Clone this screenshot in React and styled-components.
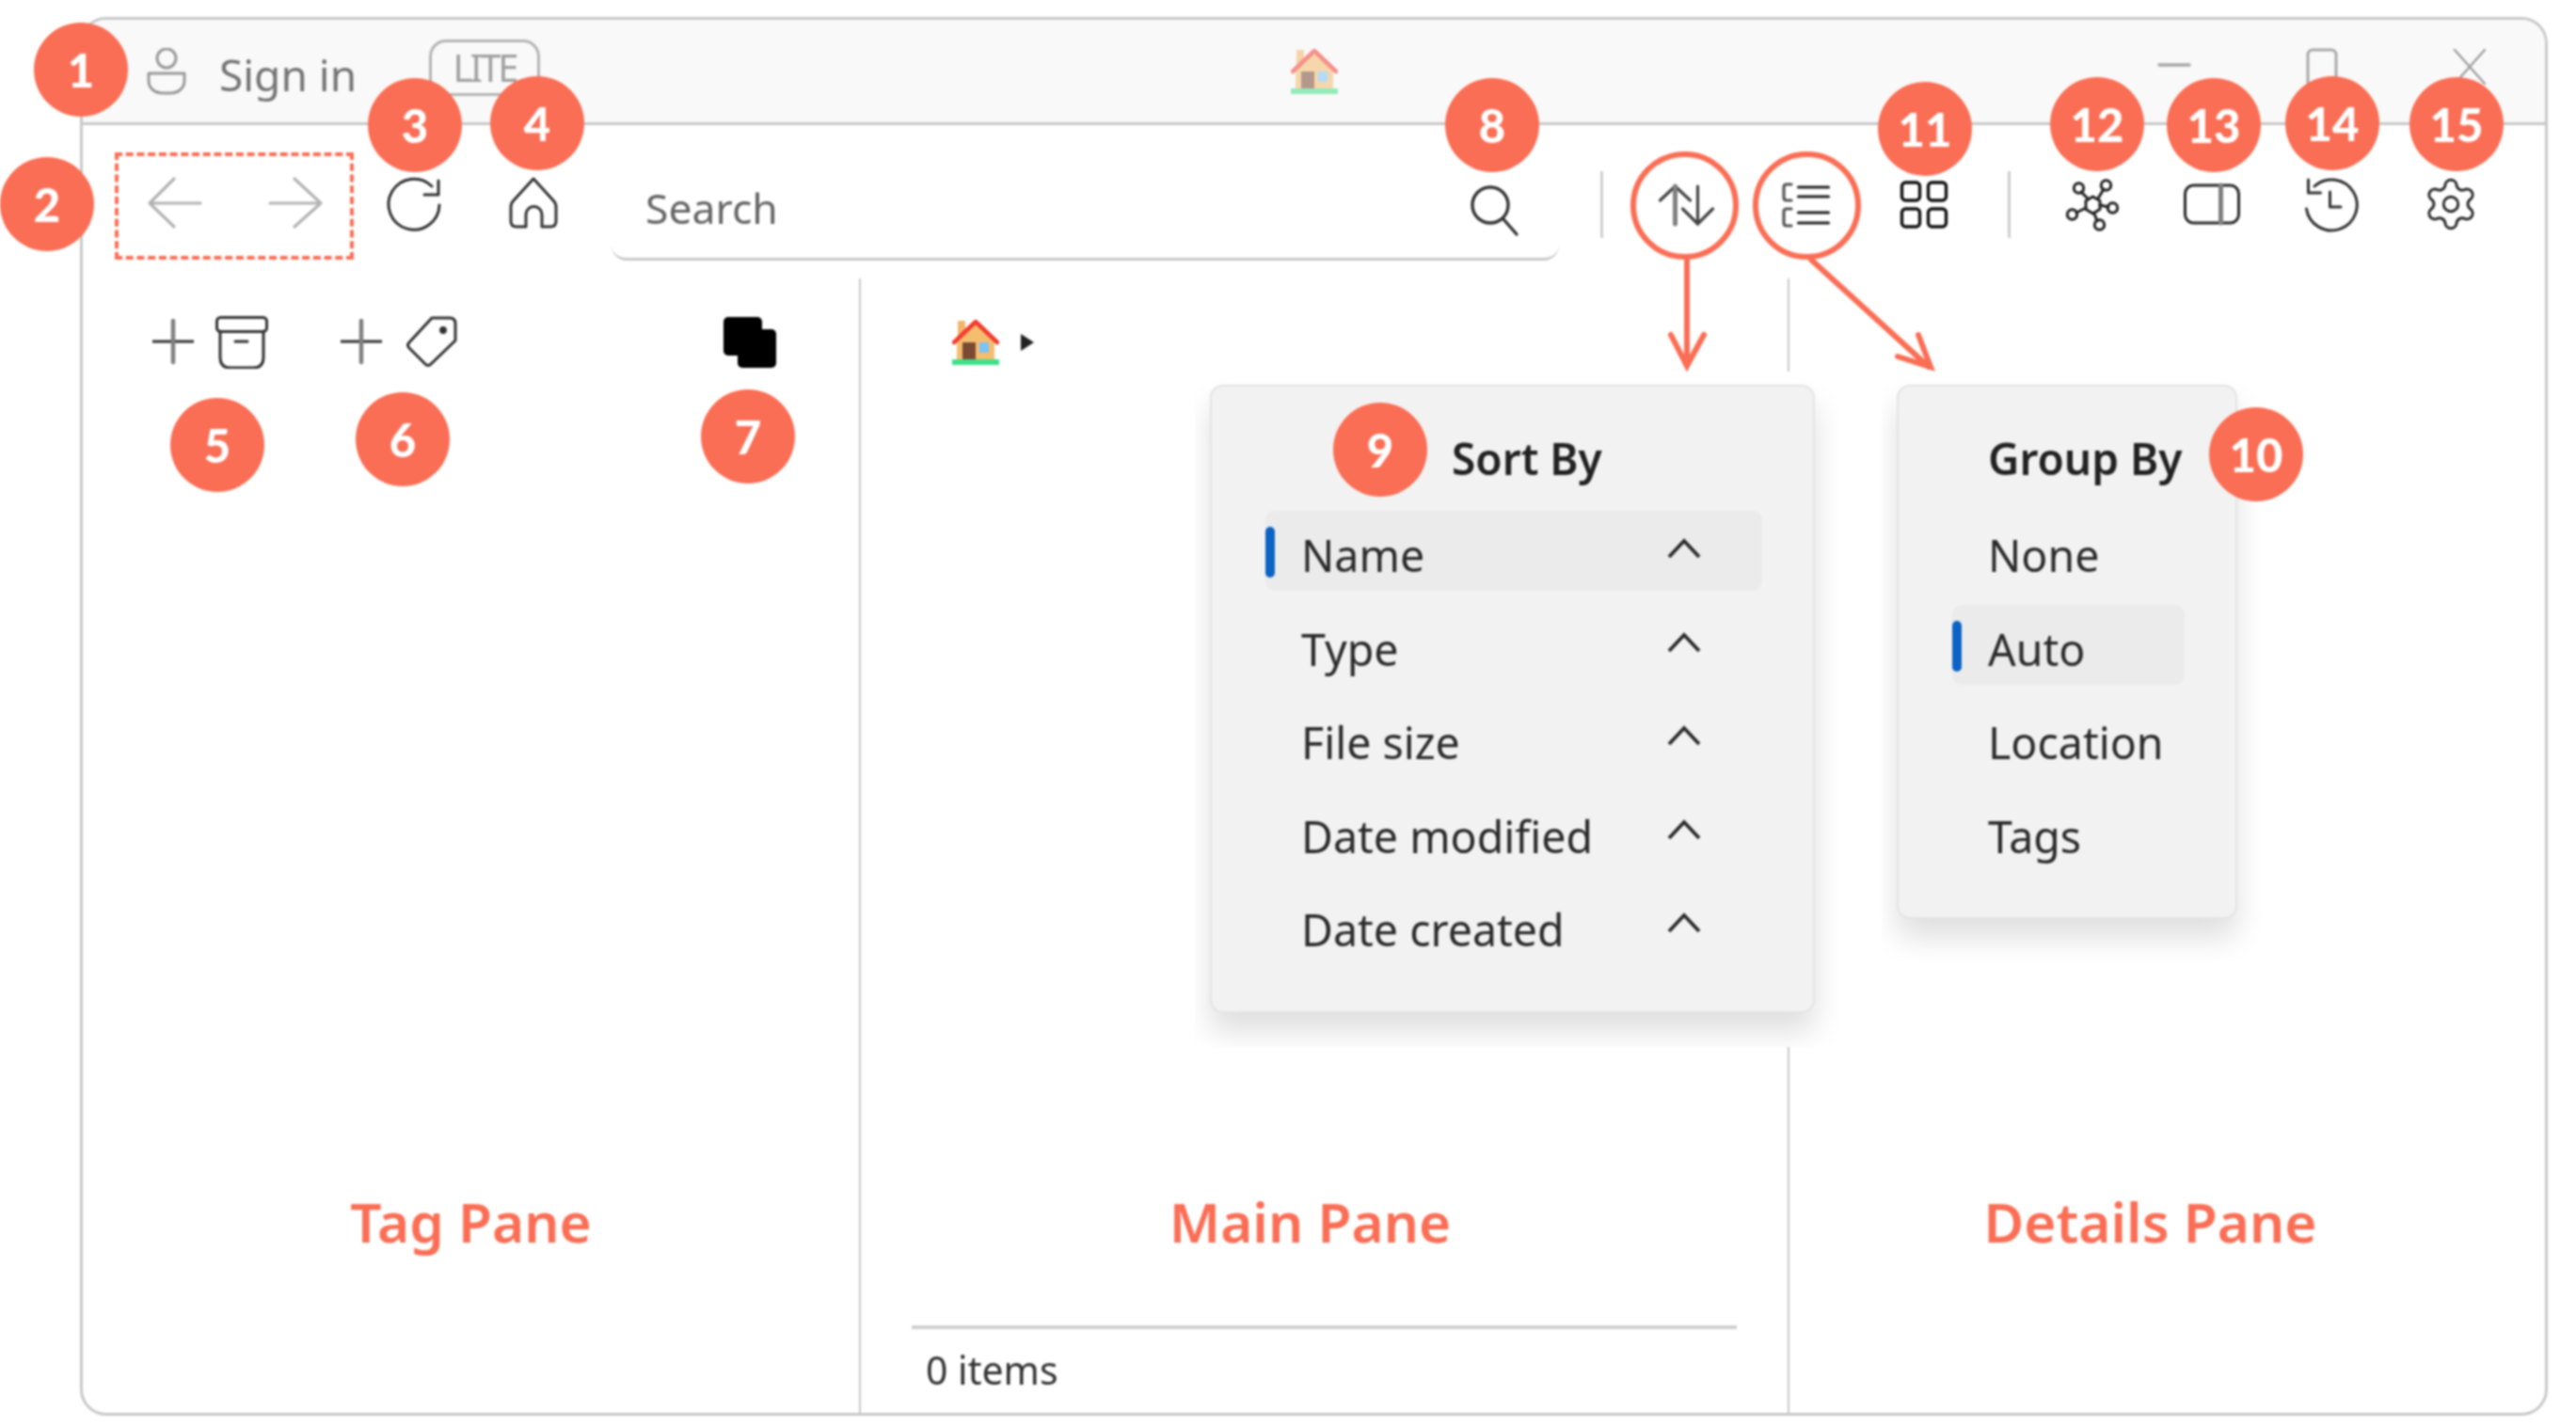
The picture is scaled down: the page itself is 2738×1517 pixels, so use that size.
import React from "react";
import styled, { createGlobalStyle } from "styled-components";
import { Settings } from "lucide-react";

const ORANGE = "#fa6e55";
const LINE = "#c8c8c8";

const Global = createGlobalStyle`
  html, body { margin: 0; padding: 0; background: #fff; overflow: hidden; }
  * { box-sizing: border-box; }
`;

const Page = styled.div`
  position: relative;
  width: 2738px;
  height: 1517px;
  padding: 18px 30px 12px 85px;
  background: #fff;
  font-family: "Noto Sans", "Open Sans", sans-serif;
  overflow: hidden;
  filter: blur(0.9px);
`;

const Window = styled.div`
  display: flex;
  flex-direction: column;
  height: 100%;
  border: 3px solid ${LINE};
  border-radius: 28px;
  overflow: hidden;
  background: #fff;
`;

const TitleBar = styled.header`
  display: flex;
  align-items: center;
  flex: 0 0 112px;
  background: #f9f9f9;
  border-bottom: 3px solid ${LINE};
`;

const TitleLeft = styled.div`
  display: flex;
  align-items: center;
  flex: 0 0 1284px;
  padding-left: 67px;
`;

const SignIn = styled.span`
  margin-left: 34px;
  font-size: 46px;
  color: #757575;
  padding-top: 6px;
`;

const Lite = styled.span`
  display: flex;
  align-items: center;
  justify-content: center;
  width: 118px;
  height: 60px;
  margin: -8px 0 0 77px;
  border: 3px solid #b4b4b4;
  border-radius: 18px;
  font-size: 40px;
  color: #a0a0a0;
  letter-spacing: -3px;
`;

const WindowControls = styled.div`
  display: flex;
  margin-left: auto;
  padding-right: 2px;
`;

const WindowControl = styled.div`
  display: flex;
  justify-content: center;
  width: 157px;
  margin-top: -6px;
`;

const Toolbar = styled.div`
  display: flex;
  align-items: center;
  flex: 0 0 163px;
  padding: 5px 0 0 34px;
`;

const NavGroup = styled.div`
  position: relative;
  display: flex;
  &::after {
    content: "";
    position: absolute;
    left: 0;
    right: 0;
    top: -23px;
    bottom: -27px;
    border: 4px dashed ${ORANGE};
  }
`;

const ToolButton = styled.div`
  display: flex;
  align-items: center;
  justify-content: center;
  flex: 0 0 127px;
  height: 64px;
`;

const SearchBox = styled.div`
  display: flex;
  align-items: center;
  justify-content: space-between;
  flex: 0 0 1007px;
  height: 120px;
  margin-left: 20px;
  padding: 10px 41px 0 36px;
  border-bottom: 3px solid ${LINE};
  border-radius: 16px;
  font-size: 44.5px;
  color: #666;
`;

const SearchIcon = styled.span`
  display: inline-flex;
  margin-top: 6px;
`;

const ToolDivider = styled.div`
  flex: 0 0 3px;
  height: 71px;
  margin: 0 ${(p) => p.$right}px 0 ${(p) => p.$left}px;
  background: #cfcfcf;
`;

const Panes = styled.div`
  display: flex;
  flex: 1;
  min-height: 0;
`;

const Pane = styled.section`
  display: grid;
  grid-template-rows: auto 1fr 93px;
  flex: ${(p) => (p.$width ? `0 0 ${p.$width}px` : "1")};
  border-right: ${(p) => (p.$width ? `2px solid ${LINE}` : "none")};
`;

const TagTools = styled.div`
  display: flex;
  align-items: center;
  padding: 41px 88px 0 74px;
  height: 95px;
`;

const Crumbs = styled.div`
  display: flex;
  align-items: center;
  gap: 23px;
  padding: 44px 0 0 97px;
  height: 92px;
`;

const PaneLabel = styled.div`
  align-self: end;
  justify-self: center;
  margin-right: ${(p) => p.$shift || 0}px;
  padding-bottom: 71px;
  font-size: 58.5px;
  line-height: 80px;
  font-weight: 600;
  color: ${ORANGE};
`;

const StatusBar = styled.footer`
  display: flex;
  align-items: center;
  margin: 0 54px;
  padding: 0 0 4px 15px;
  border-top: 4px solid #cfcfcf;
  font-size: 41px;
  color: #333;
`;

const Spacer = styled.div`
  height: 0;
`;

const Badge = styled.div`
  position: absolute;
  left: ${(p) => p.$x - 50}px;
  top: ${(p) => p.$y - 50}px;
  display: flex;
  align-items: center;
  justify-content: center;
  width: 100px;
  height: 100px;
  border-radius: 50%;
  background: ${ORANGE};
  color: #fff;
  font-family: "Lato", sans-serif;
  font-size: 49px;
  font-weight: 900;
`;

const Ring = styled.div`
  position: absolute;
  left: ${(p) => p.$x}px;
  top: 161px;
  width: 115px;
  height: 115px;
  border: 6px solid ${ORANGE};
  border-radius: 50%;
`;

const ArrowLayer = styled.svg`
  position: absolute;
  left: 1760px;
  top: 270px;
  width: 320px;
  height: 130px;
`;

const MenuSheet = styled.div`
  position: absolute;
  left: ${(p) => p.$x}px;
  top: 395px;
  width: ${(p) => p.$w}px;
  height: 718px;
  padding: 14px 0 0 ${(p) => p.$pad}px;
  background: ${(p) => (p.$white ? "#fff" : "transparent")};
  overflow: hidden;
`;

const Menu = styled.div`
  width: ${(p) => p.$w}px;
  height: ${(p) => p.$h}px;
  padding-left: 57px;
  background: #f2f2f2;
  border: 2px solid #e4e4e4;
  border-radius: 14px;
  box-shadow: 0 20px 32px rgba(0, 0, 0, 0.13);
`;

const MenuTitle = styled.div`
  display: flex;
  align-items: center;
  height: 132px;
  padding: 20px 0 0 ${(p) => p.$left}px;
  font-size: 46px;
  font-weight: 600;
  color: #222;
`;

const MenuRow = styled.div`
  position: relative;
  display: flex;
  align-items: center;
  justify-content: space-between;
  width: ${(p) => p.$w}px;
  height: 85px;
  margin-bottom: 14.6px;
  padding: 9px 65px 0 38px;
  border-radius: 10px;
  background: ${(p) => (p.$active ? "#ebebeb" : "transparent")};
  font-size: 46.5px;
  color: #2b2b2b;
  &::before {
    content: "";
    display: ${(p) => (p.$active ? "block" : "none")};
    position: absolute;
    left: 0;
    top: 17px;
    width: 10px;
    height: 54px;
    border-radius: 5px;
    background: #0b63c4;
  }
`;

const Chevron = styled.svg`
  width: 36px;
  height: 22px;
  margin-top: -14px;
`;

const Ico = ({ children, w = 64, h = 64, color = "#333", sw = 3 }) => (
  <svg width={w} height={h} viewBox={`0 0 ${w} ${h}`} fill="none" stroke={color} strokeWidth={sw} strokeLinecap="round" strokeLinejoin="round">
    {children}
  </svg>
);

const House = ({ faded }) => (
  <svg width="50" height="48" viewBox="0 0 50 48" style={{ flex: "0 0 50px", opacity: faded ? 0.55 : 1 }}>
    <rect x="6" y="1" width="8" height="22" fill="#f2b66a" />
    <path d="M5 24 L25 4 L45 24 V42 H5 Z" fill="#f5bd6e" />
    <path d="M2 24 L25 2 L48 24" fill="none" stroke="#f33b30" strokeWidth="4.5" strokeLinecap="round" strokeLinejoin="round" />
    <rect x="11" y="24" width="14" height="18" fill="#7a4a33" />
    <rect x="29" y="24" width="10" height="11" fill="#7cc4f8" />
    <rect x="0" y="42" width="50" height="6" fill="#3fe08a" />
  </svg>
);

const Plus = () => (
  <Ico w={44} h={54}>
    <path d="M0 26H44" />
    <path d="M22 4V48" stroke="#808080" strokeWidth="4.5" />
  </Ico>
);

const IconGap = styled.span`
  display: inline-flex;
  margin-left: ${(p) => p.$left}px;
`;

const CopyGap = styled.span`
  display: inline-flex;
  margin-left: auto;
`;

const sortRows = ["Name", "Type", "File size", "Date modified", "Date created"];
const groupRows = ["None", "Auto", "Location", "Tags"];
const badges = [
  [1, 86, 74], [2, 50, 217], [3, 441, 133], [4, 571, 131], [5, 231, 473],
  [6, 428, 467], [7, 795, 464], [8, 1586, 133], [9, 1467, 478], [10, 2398, 483],
  [11, 2046, 137], [12, 2229, 132], [13, 2353, 133], [14, 2479, 131], [15, 2611, 132],
];

const graphNodes = [[17.5, 15], [46.5, 12], [53.5, 36], [39.5, 54], [10.5, 43]];

export default function App() {
  return (
    <Page>
      <Global />
      <Window>
        <TitleBar>
          <TitleLeft>
            <Ico w={44} h={50} color="#9a9a9a">
              <circle cx="22" cy="11" r="10" />
              <path d="M3 27H41V35C41 43 34 48 26 48H18C10 48 3 43 3 35Z" />
            </Ico>
            <SignIn>Sign in</SignIn>
            <Lite>LITE</Lite>
          </TitleLeft>
          <House faded />
          <WindowControls>
            <WindowControl>
              <Ico w={36} h={40} color="#a8a8a8" sw={3.5}><path d="M2 18H34" /></Ico>
            </WindowControl>
            <WindowControl>
              <Ico w={36} h={44} color="#a8a8a8" sw={3}><rect x="3" y="2" width="30" height="40" rx="5" /></Ico>
            </WindowControl>
            <WindowControl>
              <Ico w={36} h={40} color="#a0a0a0" sw={2.4}><path d="M2 2L34 38M34 2L2 38" /></Ico>
            </WindowControl>
          </WindowControls>
        </TitleBar>

        <Toolbar>
          <NavGroup>
            <ToolButton>
              <Ico color="#b4b4b4" sw={3.2}><path d="M31 5L5 31L31 56M5 31H59" /></Ico>
            </ToolButton>
            <ToolButton>
              <Ico color="#b4b4b4" sw={3.2}><path d="M32 5L60 31L32 56M60 31H6" /></Ico>
            </ToolButton>
          </NavGroup>
          <ToolButton>
            <Ico>
              <path d="M59 33A27 27 0 1 1 51 13" />
              <path d="M58 7V22H43" />
            </Ico>
          </ToolButton>
          <ToolButton>
            <Ico>
              <path d="M32 5L11 28Q8 31 8 35V50Q8 56 14 56H24V43A8.5 8.5 0 0 1 41 43V56H50Q56 56 56 50V35Q56 31 53 28Z" />
            </Ico>
          </ToolButton>
          <SearchBox>
            Search
            <SearchIcon>
              <Ico w={56} h={56} color="#333" sw={3.4}>
                <circle cx="24" cy="22" r="19" />
                <path d="M38 37L52 53" />
              </Ico>
            </SearchIcon>
          </SearchBox>
          <ToolDivider $left={44} $right={25} />
          <ToolButton>
            <Ico color="#444" sw={3.2}>
              <path d="M3.5 28L19.5 13L35.5 28" />
              <path d="M19.5 13V53" stroke="#808080" strokeWidth="5" />
              <path d="M27.5 37L43.5 53L59.5 37" />
              <path d="M43.5 13V53" />
            </Ico>
          </ToolButton>
          <ToolButton>
            <Ico color="#222" sw={3.2}>
              <path d="M23.5 14H55.5M23.5 24H55.5M23.5 41H55.5M23.5 52H55.5" />
              <path d="M16 11H11Q8 11 8 14V25Q8 28 11 28H16M16 37H11Q8 37 8 40V52Q8 55 11 55H16" stroke="#555" />
            </Ico>
          </ToolButton>
          <ToolButton>
            <Ico color="#111" sw={3.4}>
              <rect x="6.5" y="9" width="19" height="19" rx="4" />
              <rect x="34.5" y="9" width="19" height="19" rx="4" />
              <rect x="6.5" y="37" width="19" height="19" rx="4" />
              <rect x="34.5" y="37" width="19" height="19" rx="4" />
            </Ico>
          </ToolButton>
          <ToolDivider $left={24} $right={23} />
          <ToolButton>
            <Ico color="#222" sw={3}>
              <path d="M32.5 24L40 28.5V37.5L32.5 42L25 37.5V28.5Z" />
              <path d="M20 19L27 26M44 16L38 26M49 35L40 33M37 50L34 42M15 41L25 36" />
              {graphNodes.map(([x, y]) => (
                <circle key={x} cx={x} cy={y} r="5.2" />
              ))}
            </Ico>
          </ToolButton>
          <ToolButton>
            <Ico color="#2a2a2a">
              <rect x="3.5" y="12" width="57" height="40" rx="9" />
              <path d="M41.5 12V52" stroke="#808080" strokeWidth="5" />
            </Ico>
          </ToolButton>
          <ToolButton>
            <Ico>
              <path d="M14 13A27 27 0 1 1 5.5 37" />
              <path d="M7.5 6V20H20.5" />
              <path d="M30.5 19V35H42" />
            </Ico>
          </ToolButton>
          <ToolButton>
            <Settings size={62} strokeWidth={1.15} color="#2e2e2e" />
          </ToolButton>
        </Toolbar>

        <Panes>
          <Pane $width={827}>
            <TagTools>
              <Plus />
              <IconGap $left={23}>
                <Ico w={56} h={56}>
                  <rect x="1.5" y="1.5" width="53" height="15" rx="4" />
                  <path d="M5 16V44Q5 55 16 55H40Q51 55 51 44V16M21 27H34" />
                </Ico>
              </IconGap>
              <IconGap $left={77}><Plus /></IconGap>
              <IconGap $left={26}>
                <Ico w={54} h={56}>
                  <path d="M27 2H46Q52 2 52 8V26L26 51Q23 54 20 51L3 34Q0 31 3 28Z" />
                  <circle cx="39" cy="15" r="2.4" fill="#222" />
                </Ico>
              </IconGap>
              <CopyGap>
                <svg width="56" height="54" viewBox="0 0 56 54">
                  <rect x="0" y="0" width="41" height="41" rx="5" />
                  <rect x="15" y="13" width="41" height="41" rx="5" />
                </svg>
              </CopyGap>
            </TagTools>
            <PaneLabel>Tag Pane</PaneLabel>
            <Spacer />
          </Pane>
          <Pane $width={987}>
            <Crumbs>
              <House />
              <svg width="14" height="18" viewBox="0 0 14 18"><path d="M0 0L14 9L0 18Z" fill="#222" /></svg>
            </Crumbs>
            <PaneLabel $shift={30}>Main Pane</PaneLabel>
            <StatusBar>0 items</StatusBar>
          </Pane>
          <Pane>
            <Spacer />
            <PaneLabel $shift={36}>Details Pane</PaneLabel>
            <Spacer />
          </Pane>
        </Panes>
      </Window>

      <MenuSheet $x={1270} $w={690} $pad={16} $white>
        <Menu $w={643} $h={668}>
          <MenuTitle $left={198}>Sort By</MenuTitle>
          {sortRows.map((r, i) => (
            <MenuRow key={r} $w={528} $active={i === 0}>
              {r}
              <Chevron viewBox="0 0 36 22" fill="none" stroke="#2a2a2a" strokeWidth="3.8"><path d="M2 20L18 3L34 20" /></Chevron>
            </MenuRow>
          ))}
        </Menu>
      </MenuSheet>
      <MenuSheet $x={2000} $w={420} $pad={16}>
        <Menu $w={362} $h={568}>
          <MenuTitle $left={38}>Group By</MenuTitle>
          {groupRows.map((r, i) => (
            <MenuRow key={r} $w={247} $active={i === 1}>{r}</MenuRow>
          ))}
        </Menu>
      </MenuSheet>

      <Ring $x={1733} />
      <Ring $x={1863} />
      <ArrowLayer viewBox="0 0 320 130" fill="none" stroke={ORANGE} strokeWidth="6" strokeLinecap="round">
        <path d="M33 6V116" />
        <path d="M16 86L33 119L51 86" />
        <path d="M165 6L290 120" />
        <path d="M279 86L292 120L257 109" />
      </ArrowLayer>

      {badges.map(([n, x, y]) => (
        <Badge key={n} $x={x} $y={y}>{n}</Badge>
      ))}
    </Page>
  );
}
